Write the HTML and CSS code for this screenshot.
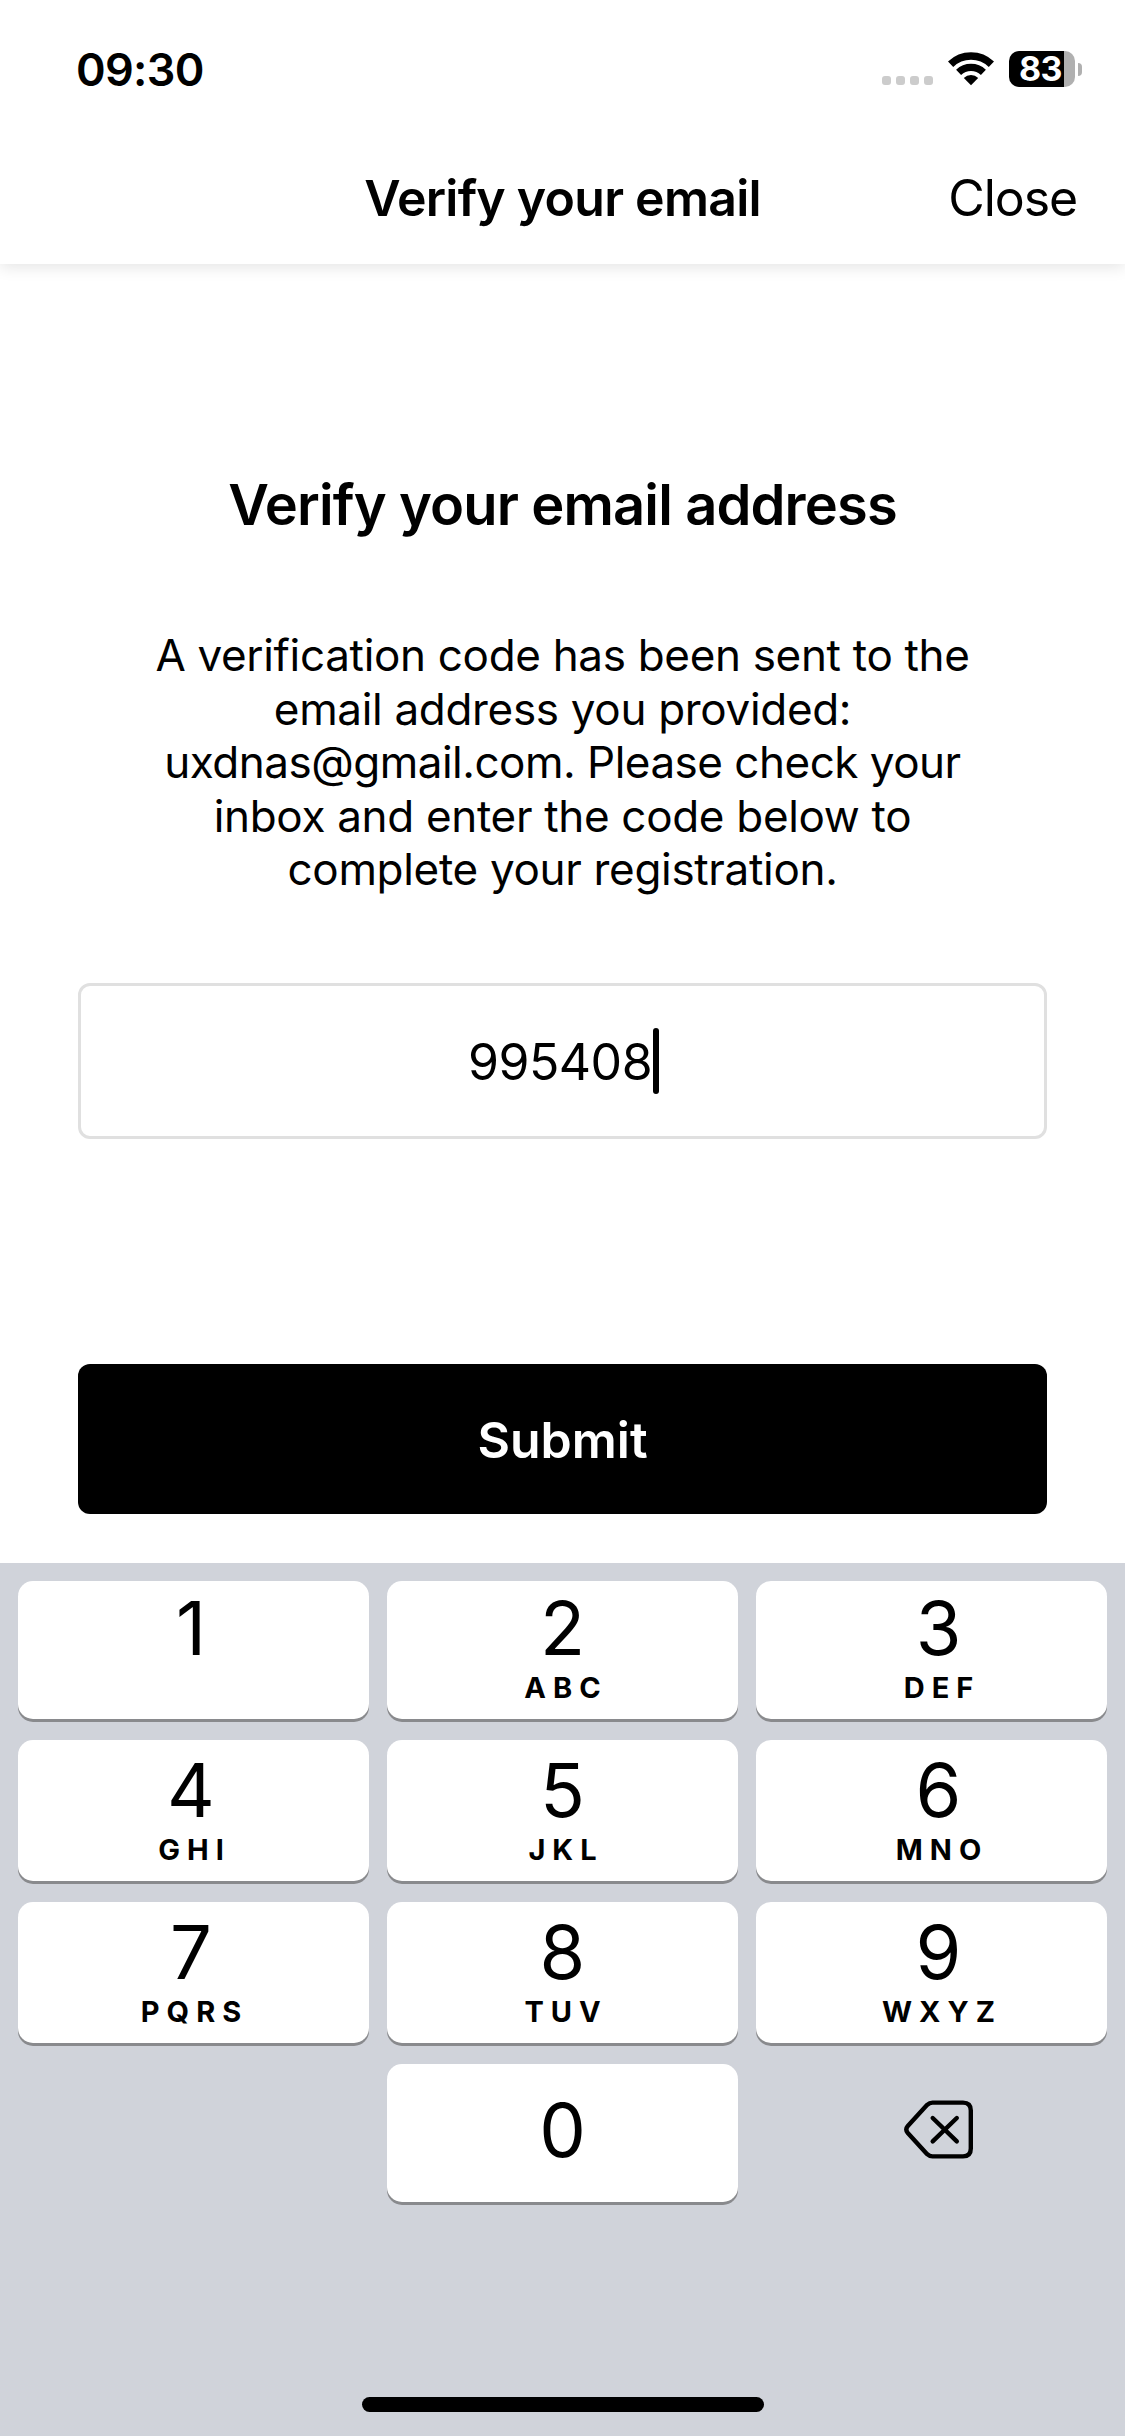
FILE: index.html
```html
<!doctype html>
<html lang="en">
<head>
	<meta charset="utf-8" />
	<title>Verify your email</title>
	<link rel="stylesheet" href="styles.css">
</head>
<body>
	<!-- status bar -->
	<div class="status">
		<span class="time">09:30</span>
		<div class="status-icons">
			<div class="dots"><i></i><i></i><i></i><i></i></div>
			<svg class="wifi" viewBox="0 0 46 34" width="46" height="34">
				<path d="M2.6 12.2A29.4 29.4 0 0 1 43.4 12.2" fill="none" stroke="#000" stroke-width="7.6" />
				<path d="M10.6 20.4A17.9 17.9 0 0 1 35.4 20.4" fill="none" stroke="#000" stroke-width="7.2" />
				<path d="M23 33.3L15.8 25.9A10.3 10.3 0 0 1 30.2 25.9Z" />
			</svg>
			<div class="battery">83</div>
			<div class="battery-cap"></div>
		</div>
	</div>
	<!-- nav -->
	<div class="nav">
		<h1>Verify your email</h1>
		<a href="#" class="close">Close</a>
	</div>
	<!-- form -->
	<div class="content">
		<h2>Verify your email address</h2>
		<p>A verification code has been sent to the<br>email address you provided:<br><span class="mail">uxdnas@gmail.com. Please check your</span><br>inbox and enter the code below to<br>complete your registration.</p>
		<div class="code"><span>995408</span><i class="caret"></i></div>
		<div class="submit">Submit</div>
	</div>
	<!-- keyboard -->
	<div class="keyboard">
		<div class="keys">
			<div class="key"><b>1</b></div>
			<div class="key"><b>2</b><span>ABC</span></div>
			<div class="key"><b>3</b><span>DEF</span></div>
			<div class="key mid"><b>4</b><span>GHI</span></div>
			<div class="key mid"><b>5</b><span>JKL</span></div>
			<div class="key mid"><b>6</b><span>MNO</span></div>
			<div class="key mid"><b>7</b><span>PQRS</span></div>
			<div class="key mid"><b>8</b><span>TUV</span></div>
			<div class="key mid"><b>9</b><span>WXYZ</span></div>
			<div class="key blank"></div>
			<div class="key zero"><b>0</b></div>
			<div class="key blank">
				<svg viewBox="0 0 70 59" width="70" height="59" fill="none" stroke="#000" stroke-width="4.4" stroke-linecap="round" stroke-linejoin="round">
					<path d="M28.5 2.6H59Q66.8 2.6 66.8 10.4V48.6Q66.8 56.4 59 56.4H28.5Q25.5 56.4 23.2 54.2L3.8 33Q.8 29.5 3.8 26L23.2 4.8Q25.5 2.6 28.5 2.6Z" />
					<path d="M28.7 18L52.8 41.4M52.8 18L28.7 41.4" />
				</svg>
			</div>
		</div>
		<div class="home"></div>
	</div>
</body>
</html>
```
FILE: styles.css
```css
* {
	margin: 0;
	padding: 0;
	box-sizing: border-box;
}
body {
	width: 1125px;
	height: 2436px;
	overflow: hidden;
	background-color: #fff;
	color: #000;
	font-family: Inter, "Liberation Sans", sans-serif;
}
/* status bar */
.status {
	height: 138px;
	padding: 0 43px 0 76px;
	display: flex;
	align-items: center;
	justify-content: space-between;
}
.time {
	font-size: 45px;
	font-weight: 600;
	letter-spacing: -0.7px;
}
.status-icons {
	display: flex;
	align-items: center;
}
.dots {
	margin: 23px 15px 0 0;
	display: flex;
	gap: 5px;
}
.dots i {
	width: 9px;
	height: 9px;
	border-radius: 3px;
	background-color: #ccc;
}
.wifi {
	margin-right: 15px;
}
.battery {
	width: 66px;
	height: 36px;
	padding-left: 10px;
	border-radius: 10px;
	background: linear-gradient(to right, #000 55px, #b0b0b0 55px);
	color: #fff;
	font-size: 34px;
	font-weight: 700;
	line-height: 36px;
	letter-spacing: -0.7px;
}
.battery-cap {
	width: 4px;
	height: 13px;
	margin-left: 3px;
	border-radius: 0 4px 4px 0;
	background-color: #b0b0b0;
}
/* nav */
.nav {
	height: 126px;
	padding: 0 48px 6px;
	display: grid;
	grid-template-columns: 1fr auto 1fr;
	align-items: center;
	box-shadow: 0 3px 15px rgba(0, 0, 0, .11);
	/* shadow only below the bar */
	clip-path: inset(0 0 -30px 0);
}
.nav h1 {
	grid-column: 2;
	font-size: 50px;
	font-weight: 600;
	letter-spacing: -0.75px;
}
.close {
	justify-self: end;
	color: #000;
	font-size: 50px;
	text-decoration: none;
	letter-spacing: -1.1px;
}
/* form */
.content {
	height: 1299px;
	padding: 208px 78px 0;
	text-align: center;
}
.content h2 {
	font-size: 56px;
	font-weight: 600;
	line-height: 66px;
	letter-spacing: -0.87px;
}
.content p {
	margin-top: 91px;
	font-size: 44px;
	line-height: 53.6px;
	letter-spacing: -0.32px;
}
.content .mail {
	letter-spacing: -0.5px;
}
.code {
	height: 156px;
	margin-top: 86px;
	padding: 2px 0 0 2px;
	border: 3px solid #e0e0e0;
	border-radius: 12px;
	display: flex;
	align-items: center;
	justify-content: center;
	font-size: 50px;
	letter-spacing: -0.5px;
}
.caret {
	width: 6px;
	height: 66px;
	margin: 0 0 2px 1px;
	border-radius: 3px;
	background-color: #000;
}
.submit {
	height: 150px;
	margin-top: 225px;
	border-radius: 12px;
	background-color: #000;
	color: #fff;
	font-size: 50px;
	font-weight: 600;
	line-height: 152px;
}
/* keyboard */
.keyboard {
	height: 873px;
	padding: 18px;
	background-color: #d0d3da;
}
.keys {
	display: grid;
	grid-template-columns: 1fr 1fr 1fr;
	gap: 21px 18px;
}
.key {
	height: 138px;
	border-radius: 15px;
	background-color: #fff;
	box-shadow: 0 3px 0 #898a8d;
	text-align: center;
}
.key b {
	display: block;
	font-size: 74px;
	font-weight: 400;
	line-height: 95px;
}
.key span {
	display: block;
	font-size: 29px;
	font-weight: 700;
	line-height: 23px;
	letter-spacing: 7px;
	text-indent: 7px;
}
.key:nth-child(3n+1) {
	padding-right: 5px;
}
.key:nth-child(3n) {
	padding-left: 14px;
}
.mid {
	height: 141px;
	padding-top: 3px;
}
.zero b {
	line-height: 133px;
}
.blank {
	padding-top: 36px;
	background: none;
	box-shadow: none;
}
.home {
	width: 402px;
	height: 15px;
	margin: 195px auto 0;
	border-radius: 8px;
	background-color: #000;
}
```
